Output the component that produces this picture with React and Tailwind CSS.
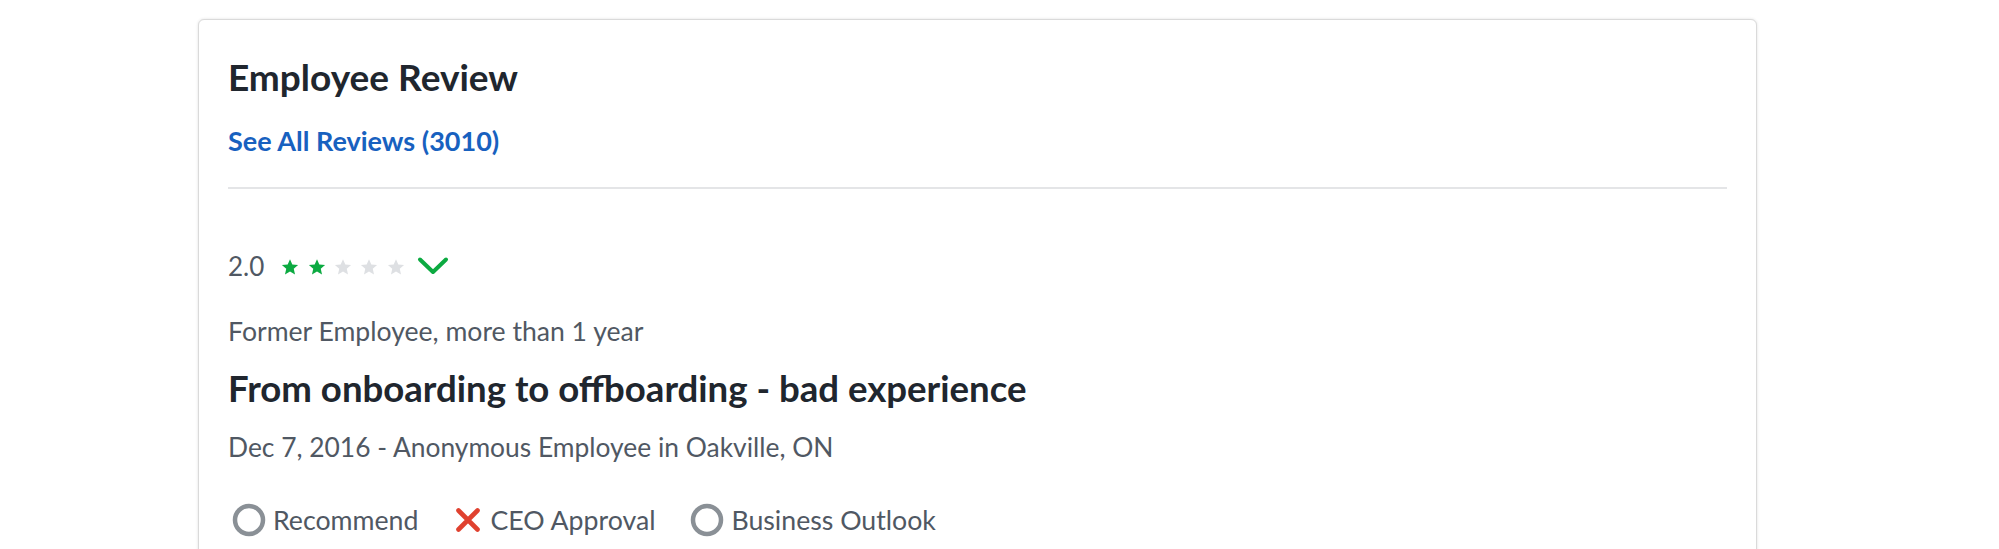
import { useState } from "react";

const GREEN = "#0caa41";

function Star({ filled }) {
  return (
    <svg width="18" height="18" viewBox="0 0 24 24" className="shrink-0">
      <path
        d="M12 1.5l3.1 7.1 7.7.7-5.8 5.1 1.7 7.6L12 18.1 5.3 22l1.7-7.6L1.2 9.3l7.7-.7z"
        fill={filled ? GREEN : "#dee0e3"}
      />
    </svg>
  );
}

function Chevron() {
  return (
    <svg width="32" height="20" viewBox="0 0 32 20" className="shrink-0">
      <polyline
        points="3,3.5 16,16 29,3.5"
        fill="none"
        stroke={GREEN}
        strokeWidth="4"
        strokeLinecap="round"
        strokeLinejoin="round"
      />
    </svg>
  );
}

function Neutral() {
  return (
    <svg width="34" height="34" viewBox="0 0 34 34" className="shrink-0">
      <circle cx="17" cy="17" r="14" fill="none" stroke="#8a9096" strokeWidth="4.5" />
    </svg>
  );
}

function Cross() {
  return (
    <svg width="24" height="24" viewBox="0 0 24 24" className="shrink-0">
      <path
        d="M2.5 2.5l19 19M21.5 2.5l-19 19"
        stroke="#e0412f"
        strokeWidth="4.6"
        strokeLinecap="round"
      />
    </svg>
  );
}

const ratings = [
  { label: "Recommend", kind: "neutral", ml: "ml-[4px]" },
  { label: "CEO Approval", kind: "no", ml: "ml-[38px]" },
  { label: "Business Outlook", kind: "neutral", ml: "ml-[35px]" },
];

export default function App() {
  const [open, setOpen] = useState(false);
  const score = 2;

  return (
    <div className="min-h-[549px] bg-white pt-[19px] font-['Lato','Noto_Sans',sans-serif] overflow-hidden">
      <section className="ml-[198px] w-[1559px] min-h-[700px] rounded-[6px] border border-[#dadada] bg-white px-[29px] pt-[35px] shadow-[0_0_3px_rgba(0,0,0,0.12)]">
        <h2 className="text-[37px] leading-[44px] font-bold text-[#20262e]">Employee Review</h2>
        <a href="#" className="mt-[26px] block text-[27px] leading-[32px] font-bold text-[#1861bf]">
          See All Reviews (3010)
        </a>
        <div className="mt-[30px] h-[2px] bg-[#e4e5e7]" />

        <div className="mt-[61px] flex h-[32px] items-center">
          <span className="text-[26px] leading-[32px] text-[#505863]">{score}.0</span>
          <div className="ml-[17px] mt-[2px] flex items-center gap-[8.4px]">
            {[1, 2, 3, 4, 5].map((i) => (
              <Star key={i} filled={i <= score} />
            ))}
          </div>
          <button onClick={() => setOpen(!open)} className="ml-[12px] flex items-center">
            <Chevron />
          </button>
        </div>

        <p className="mt-[33px] text-[26.6px] leading-[32px] text-[#505863]">Former Employee, more than 1 year</p>
        <h3 className="mt-[19px] text-[36.6px] leading-[44px] font-bold text-[#20262e]">
          From onboarding to offboarding - bad experience
        </h3>
        <p className="mt-[21px] text-[26.4px] leading-[32px] text-[#505863]">
          Dec 7, 2016 - Anonymous Employee in Oakville, ON
        </p>

        <div className="mt-[40px] flex h-[34px] items-center text-[26.7px] leading-[32px] text-[#505863]">
          {ratings.map((r) => (
            <div key={r.label} className={`flex items-center ${r.ml}`}>
              {r.kind === "no" ? <Cross /> : <Neutral />}
              <span className={r.kind === "no" ? "ml-[10px]" : "ml-[7px]"}>{r.label}</span>
            </div>
          ))}
        </div>
      </section>
    </div>
  );
}
